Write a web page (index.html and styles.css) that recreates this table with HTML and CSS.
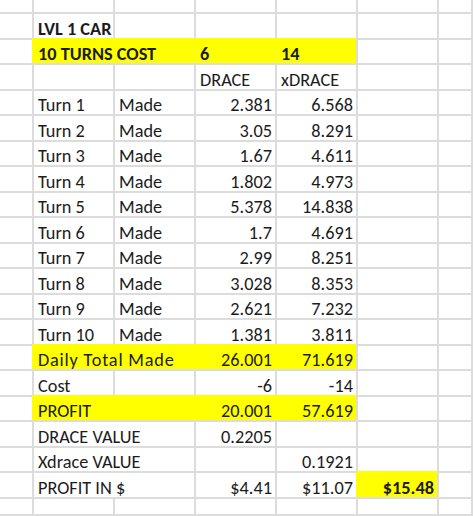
FILE: index.html
```html
<!DOCTYPE html>
<html>
<head>
<meta charset="utf-8">
<link rel="stylesheet" href="styles.css">
</head>
<body>
<div class="sheet">
  <!-- R0 -->
  <div class="c"></div><div class="c"></div><div class="c"></div><div class="c"></div><div class="c"></div><div class="c"></div><div class="c"></div>
  <!-- R1 -->
  <div class="c"></div><div class="c b">LVL 1 CAR</div><div class="c"></div><div class="c"></div><div class="c"></div><div class="c"></div><div class="c"></div>
  <!-- R2 -->
  <div class="c"></div><div class="c s2 y b">10 TURNS COST</div><div class="c y b">6</div><div class="c y b">14</div><div class="c"></div><div class="c"></div>
  <!-- R3 -->
  <div class="c"></div><div class="c"></div><div class="c"></div><div class="c">DRACE</div><div class="c">xDRACE</div><div class="c"></div><div class="c"></div>
  <!-- Turns -->
  <div class="c"></div><div class="c">Turn 1</div><div class="c">Made</div><div class="c r">2.381</div><div class="c r">6.568</div><div class="c"></div><div class="c"></div>
  <div class="c"></div><div class="c">Turn 2</div><div class="c">Made</div><div class="c r">3.05</div><div class="c r">8.291</div><div class="c"></div><div class="c"></div>
  <div class="c"></div><div class="c">Turn 3</div><div class="c">Made</div><div class="c r">1.67</div><div class="c r">4.611</div><div class="c"></div><div class="c"></div>
  <div class="c"></div><div class="c">Turn 4</div><div class="c">Made</div><div class="c r">1.802</div><div class="c r">4.973</div><div class="c"></div><div class="c"></div>
  <div class="c"></div><div class="c">Turn 5</div><div class="c">Made</div><div class="c r">5.378</div><div class="c r">14.838</div><div class="c"></div><div class="c"></div>
  <div class="c"></div><div class="c">Turn 6</div><div class="c">Made</div><div class="c r">1.7</div><div class="c r">4.691</div><div class="c"></div><div class="c"></div>
  <div class="c"></div><div class="c">Turn 7</div><div class="c">Made</div><div class="c r">2.99</div><div class="c r">8.251</div><div class="c"></div><div class="c"></div>
  <div class="c"></div><div class="c">Turn 8</div><div class="c">Made</div><div class="c r">3.028</div><div class="c r">8.353</div><div class="c"></div><div class="c"></div>
  <div class="c"></div><div class="c">Turn 9</div><div class="c">Made</div><div class="c r">2.621</div><div class="c r">7.232</div><div class="c"></div><div class="c"></div>
  <div class="c"></div><div class="c">Turn 10</div><div class="c">Made</div><div class="c r">1.381</div><div class="c r">3.811</div><div class="c"></div><div class="c"></div>
  <!-- Daily -->
  <div class="c"></div><div class="c s2 y wide">Daily Total Made</div><div class="c r y">26.001</div><div class="c r y">71.619</div><div class="c"></div><div class="c"></div>
  <!-- Cost -->
  <div class="c"></div><div class="c">Cost</div><div class="c"></div><div class="c r">-6</div><div class="c r">-14</div><div class="c"></div><div class="c"></div>
  <!-- Profit -->
  <div class="c"></div><div class="c s2 y">PROFIT</div><div class="c r y">20.001</div><div class="c r y">57.619</div><div class="c"></div><div class="c"></div>
  <!-- Drace value -->
  <div class="c"></div><div class="c s2">DRACE VALUE</div><div class="c r">0.2205</div><div class="c"></div><div class="c"></div><div class="c"></div>
  <!-- Xdrace value -->
  <div class="c"></div><div class="c s2">Xdrace VALUE</div><div class="c"></div><div class="c r">0.1921</div><div class="c"></div><div class="c"></div>
  <!-- Profit in $ -->
  <div class="c"></div><div class="c s2">PROFIT IN $</div><div class="c r">$4.41</div><div class="c r">$11.07</div><div class="c r y b">$15.48</div><div class="c"></div>
  <!-- R20 -->
  <div class="c"></div><div class="c"></div><div class="c"></div><div class="c"></div><div class="c"></div><div class="c"></div><div class="c"></div>
</div>
</body>
</html>
```

FILE: styles.css
```css
html, body {
  margin: 0;
  padding: 0;
  background: #fff;
}

.sheet {
  display: grid;
  grid-template-columns: 34px repeat(5, 81px) 1fr;
  grid-template-rows: 14px repeat(9, 26px 25px) 26px 1fr;
  width: 473px;
  height: 516px;
  overflow: hidden;
  font-family: Carlito, Lato, "Liberation Sans", sans-serif;
  font-size: 18.3px;
  line-height: 1;
  color: #1c1c1c;
}

.c {
  box-sizing: border-box;
  border-right: 2px solid #dcdcdc;
  border-bottom: 2px solid #dcdcdc;
  display: flex;
  align-items: flex-end;
  padding: 0 3px 0 4px;
  white-space: nowrap;
  overflow: visible;
  background: #fff;
}

.s2 {
  grid-column: span 2;
}

.r {
  justify-content: flex-end;
}

.b {
  font-weight: bold;
}

.wide {
  letter-spacing: 0.8px;
}

.y {
  background: #ffff00;
  box-shadow: -2px -2px 0 0 #ffff00;
}
```
